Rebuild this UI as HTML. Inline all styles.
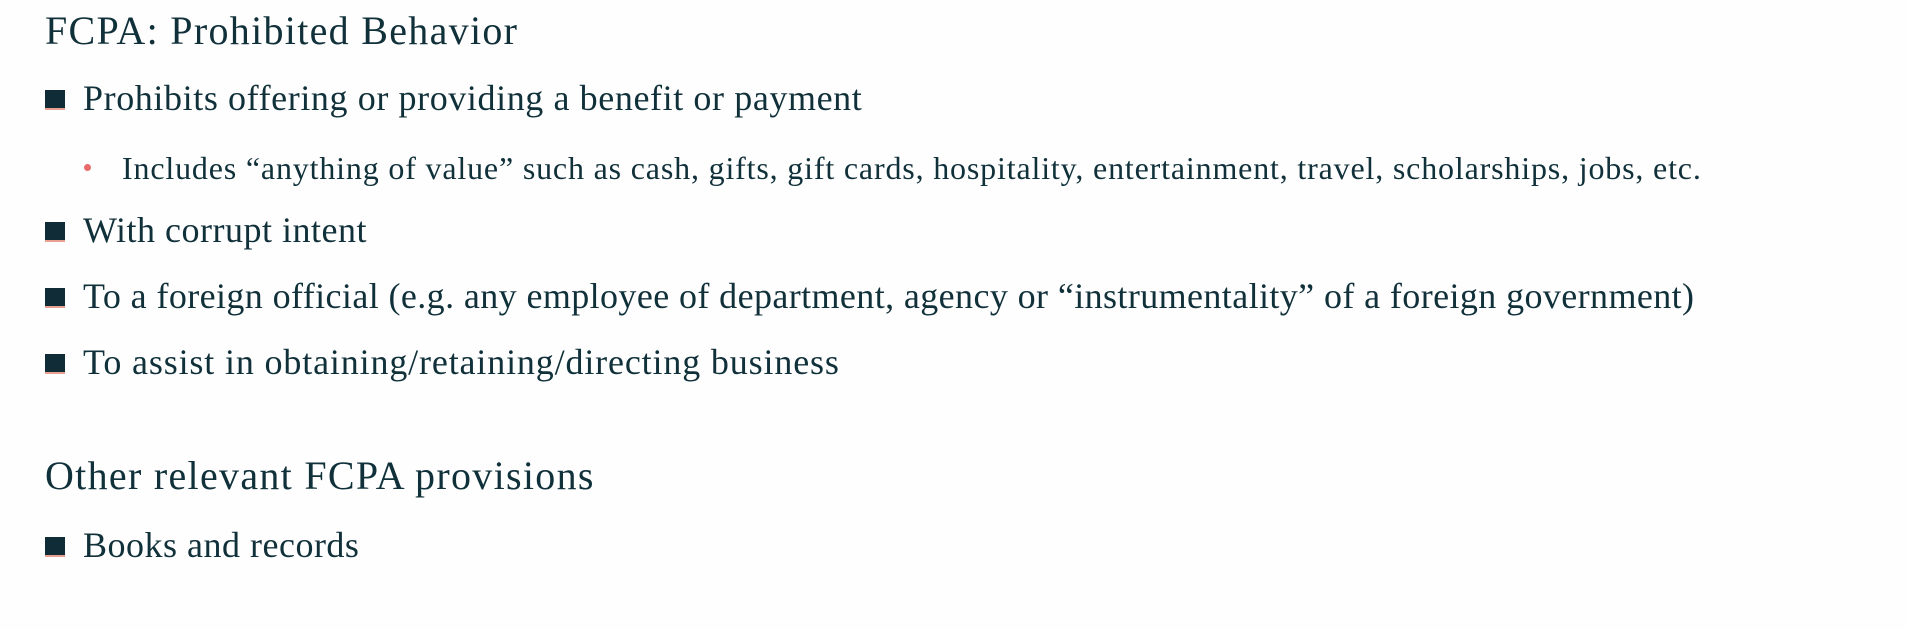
<!DOCTYPE html>
<html><head><meta charset="utf-8"><style>
html,body{margin:0;padding:0;background:#fefefe;width:1906px;height:630px;overflow:hidden}
body{position:relative;font-family:"Liberation Serif",serif;color:#10303a}
.t{position:absolute;white-space:nowrap;line-height:1}
.h{font-size:40px;left:45px;letter-spacing:1.3px}
.i{font-size:36px;left:83px;letter-spacing:0.5px}
.s{font-size:32px;left:122px;letter-spacing:0.83px}
.b{position:absolute;left:45px;width:20px;height:20px;background:#0f2c37;border-bottom:2px solid #e8a090;box-sizing:border-box}
.d{position:absolute;left:84px;width:7px;height:7px;border-radius:50%;background:#e86a6a}
</style></head><body>
<div class="t h" style="top:11px">FCPA: Prohibited Behavior</div>
<div class="b" style="top:90px"></div><div class="t i" style="top:80px;letter-spacing:0.6px">Prohibits offering or providing a benefit or payment</div>
<div class="d" style="top:164px"></div><div class="t s" style="top:152px">Includes “anything of value” such as cash, gifts, gift cards, hospitality, entertainment, travel, scholarships, jobs, etc.</div>
<div class="b" style="top:222px"></div><div class="t i" style="top:212px">With corrupt intent</div>
<div class="b" style="top:288px"></div><div class="t i" style="top:278px;letter-spacing:0.4px">To a foreign official (e.g. any employee of department, agency or “instrumentality” of a foreign government)</div>
<div class="b" style="top:354px"></div><div class="t i" style="top:344px;letter-spacing:0.85px">To assist in obtaining/retaining/directing business</div>
<div class="t h" style="top:456px">Other relevant FCPA provisions</div>
<div class="b" style="top:537px"></div><div class="t i" style="top:527px">Books and records</div>
</body></html>
